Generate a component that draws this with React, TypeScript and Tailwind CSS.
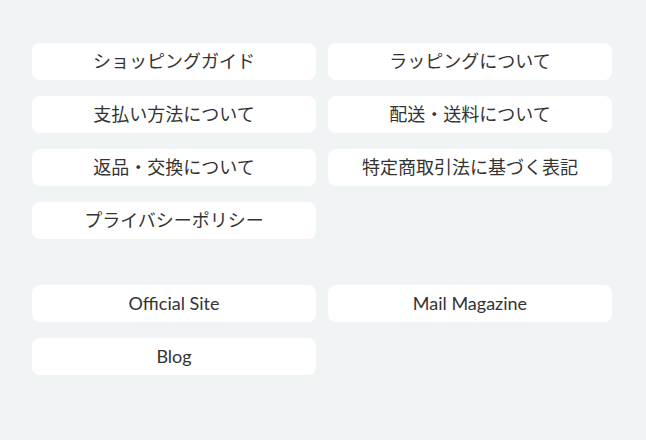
import React from 'react';

const guideLinks = [
  'ショッピングガイド',
  'ラッピングについて',
  '支払い方法について',
  '配送・送料について',
  '返品・交換について',
  '特定商取引法に基づく表記',
  'プライバシーポリシー',
];

const externalLinks = ['Official Site', 'Mail Magazine', 'Blog'];

const LinkButton: React.FC<{ label: string }> = ({ label }) => (
  <a
    href="#"
    className="flex h-[37px] items-center justify-center rounded-lg bg-white text-[18px] text-[#333] no-underline"
  >
    {label}
  </a>
);

export default function App() {
  return (
    <div
      className="min-h-[440px] w-full bg-[#f1f4f5] pt-[43px]"
      style={{ fontFamily: 'Lato, "Noto Sans CJK JP", sans-serif' }}
    >
      <div className="ml-[32px] w-[580px]">
        <div className="grid grid-cols-2 gap-x-[12px] gap-y-[16px]">
          {guideLinks.map((label) => (
            <LinkButton key={label} label={label} />
          ))}
        </div>

        <div className="mt-[46px] grid grid-cols-2 gap-x-[12px] gap-y-[16px]">
          {externalLinks.map((label) => (
            <LinkButton key={label} label={label} />
          ))}
        </div>
      </div>
    </div>
  );
}
